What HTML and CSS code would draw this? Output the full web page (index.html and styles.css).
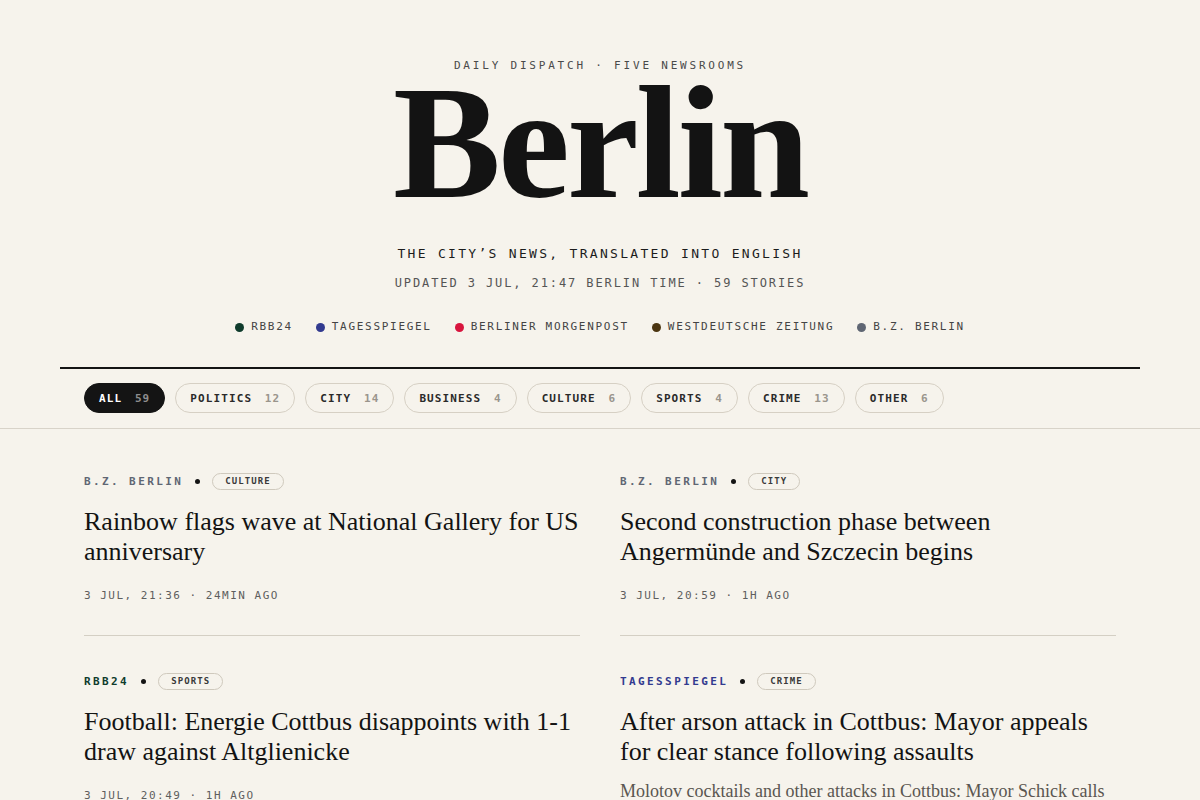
FILE: index.html
```html
<!DOCTYPE html>
<html lang="en">

<head>
    <meta charset="utf-8">
    <meta name="viewport" content="width=device-width, initial-scale=1.0">
    <title>Berlin · Daily Dispatch</title>
    <link rel="stylesheet" href="styles.css">
</head>

<body>
    <header class="masthead">
        <p class="kicker">Daily Dispatch · Five Newsrooms</p>
        <h1 class="title">Berlin</h1>
        <p class="tagline">The city’s news, translated into English</p>
        <p class="updated">Updated 3 Jul, 21:47 Berlin time · 59 stories</p>

        <ul class="legend">
            <li><span class="dot rbb"></span>rbb24</li>
            <li><span class="dot tsp"></span>Tagesspiegel</li>
            <li><span class="dot bm"></span>Berliner Morgenpost</li>
            <li><span class="dot wz"></span>Westdeutsche Zeitung</li>
            <li><span class="dot bz"></span>B.Z. Berlin</li>
        </ul>
    </header>

    <nav class="filters">
        <div class="filters_inner">
            <button class="filter valgt">All <span>59</span></button>
            <button class="filter">Politics <span>12</span></button>
            <button class="filter">City <span>14</span></button>
            <button class="filter">Business <span>4</span></button>
            <button class="filter">Culture <span>6</span></button>
            <button class="filter">Sports <span>4</span></button>
            <button class="filter">Crime <span>13</span></button>
            <button class="filter">Other <span>6</span></button>
        </div>
    </nav>

    <main class="stories">
        <article class="story">
            <div class="meta">
                <span class="source bz">B.Z. Berlin</span>
                <span class="bullet"></span>
                <span class="tag">Culture</span>
            </div>
            <h2>Rainbow flags wave at National Gallery for US anniversary</h2>
            <p class="time">3 Jul, 21:36 · 24min ago</p>
        </article>

        <article class="story">
            <div class="meta">
                <span class="source bz">B.Z. Berlin</span>
                <span class="bullet"></span>
                <span class="tag">City</span>
            </div>
            <h2>Second construction phase between Angermünde and Szczecin begins</h2>
            <p class="time">3 Jul, 20:59 · 1h ago</p>
        </article>

        <article class="story">
            <div class="meta">
                <span class="source rbb">rbb24</span>
                <span class="bullet"></span>
                <span class="tag">Sports</span>
            </div>
            <h2>Football: Energie Cottbus disappoints with 1-1 draw against Altglienicke</h2>
            <p class="time">3 Jul, 20:49 · 1h ago</p>
        </article>

        <article class="story">
            <div class="meta">
                <span class="source tsp">Tagesspiegel</span>
                <span class="bullet"></span>
                <span class="tag">Crime</span>
            </div>
            <h2>After arson attack in Cottbus: Mayor appeals for clear stance following assaults</h2>
            <p class="summary">Molotov cocktails and other attacks in Cottbus: Mayor Schick calls for a united response from the city’s residents.</p>
            <p class="time">3 Jul, 20:31 · 1h ago</p>
        </article>

        <article class="story">
            <div class="meta">
                <span class="source bm">Berliner Morgenpost</span>
                <span class="bullet"></span>
                <span class="tag">Politics</span>
            </div>
            <h2>Senate agrees on new budget plan for Berlin districts</h2>
            <p class="time">3 Jul, 20:12 · 2h ago</p>
        </article>

        <article class="story">
            <div class="meta">
                <span class="source wz">Westdeutsche Zeitung</span>
                <span class="bullet"></span>
                <span class="tag">Business</span>
            </div>
            <h2>Rents in the capital keep rising despite rent brake</h2>
            <p class="time">3 Jul, 19:48 · 2h ago</p>
        </article>
    </main>
</body>

</html>
```

FILE: styles.css
```css
* {
    box-sizing: border-box;
    margin: 0;
    padding: 0;
}

body {
    background-color: #f6f3ec;
    color: #141414;
    font-family: "DejaVu Sans Mono", "Liberation Mono", monospace;
}

/* masthead */

.masthead {
    max-width: 1080px;
    margin: 0 auto;
    padding-top: 57px;
    text-align: center;
    border-bottom: 2px solid #141414;
}

.kicker {
    font-size: 11px;
    line-height: 18px;
    letter-spacing: 2.8px;
    text-transform: uppercase;
    color: #4a4a4a;
}

.title {
    font-family: "Liberation Serif", "DejaVu Serif", serif;
    font-weight: 700;
    font-size: 162px;
    line-height: 136px;
    letter-spacing: -3px;
    color: #131313;
}

.tagline {
    margin-top: 33px;
    font-size: 13px;
    line-height: 20px;
    letter-spacing: 2.3px;
    text-transform: uppercase;
    color: #1c1c1c;
}

.updated {
    margin-top: 10px;
    font-size: 12px;
    line-height: 18px;
    letter-spacing: 1.9px;
    text-transform: uppercase;
    color: #555;
}

.legend {
    list-style: none;
    display: flex;
    justify-content: center;
    gap: 23px;
    margin-top: 26px;
    padding-bottom: 31px;
    font-size: 11px;
    line-height: 18px;
    letter-spacing: 1.7px;
    text-transform: uppercase;
    color: #444;
}

.legend li {
    display: flex;
    align-items: center;
    gap: 7px;
}

.dot {
    width: 9px;
    height: 9px;
    border-radius: 50%;
}

.dot.rbb { background-color: #0f3b2c; }
.dot.tsp { background-color: #323a8f; }
.dot.bm { background-color: #d8153e; }
.dot.wz { background-color: #4b3510; }
.dot.bz { background-color: #5f6673; }

/* filters */

.filters {
    border-bottom: 1px solid #d8d3c9;
}

.filters_inner {
    max-width: 1080px;
    margin: 0 auto;
    padding: 14px 24px 15px;
    display: flex;
    gap: 10px;
}

.filter {
    height: 30px;
    padding: 0 14px;
    border: 1px solid #d6d0c4;
    border-radius: 15px;
    background-color: transparent;
    font-family: inherit;
    font-size: 11px;
    font-weight: 700;
    letter-spacing: 1.1px;
    text-transform: uppercase;
    color: #2a2a2a;
}

.filter span {
    margin-left: 5px;
    color: #9a958c;
}

.filter.valgt {
    background-color: #141414;
    border-color: #141414;
    color: #fff;
}

.filter.valgt span {
    color: #8d8d8d;
}

/* stories */

.stories {
    max-width: 1080px;
    margin: 0 auto;
    padding: 7px 24px 40px;
    display: grid;
    grid-template-columns: 1fr 1fr;
    column-gap: 40px;
}

.story {
    padding: 37px 0 31px;
    border-bottom: 1px solid #d4cfc4;
}

.meta {
    display: flex;
    align-items: center;
    gap: 12px;
    height: 17px;
}

.source {
    font-size: 11px;
    font-weight: 700;
    letter-spacing: 2.4px;
    text-transform: uppercase;
}

.source.rbb { color: #0f3b2c; }
.source.tsp { color: #323a8f; }
.source.bm { color: #d8153e; }
.source.wz { color: #4b3510; }
.source.bz { color: #5f6673; }

.bullet {
    width: 5px;
    height: 5px;
    border-radius: 50%;
    background-color: #141414;
}

.tag {
    height: 17px;
    padding: 0 12px;
    border: 1px solid #cfc9bd;
    border-radius: 9px;
    font-size: 9px;
    font-weight: 700;
    line-height: 15px;
    letter-spacing: 1.1px;
    text-transform: uppercase;
    color: #3a3a3a;
}

.story h2 {
    margin-top: 17px;
    font-family: "Liberation Serif", "DejaVu Serif", serif;
    font-weight: 400;
    font-size: 26px;
    line-height: 30px;
    color: #131313;
}

.summary {
    margin-top: 11px;
    font-family: "Liberation Serif", "DejaVu Serif", serif;
    font-size: 18px;
    line-height: 26px;
    color: #5a5650;
}

.time {
    margin-top: 21px;
    font-size: 11px;
    line-height: 16px;
    letter-spacing: 1.5px;
    text-transform: uppercase;
    color: #5e5e5e;
}
```
